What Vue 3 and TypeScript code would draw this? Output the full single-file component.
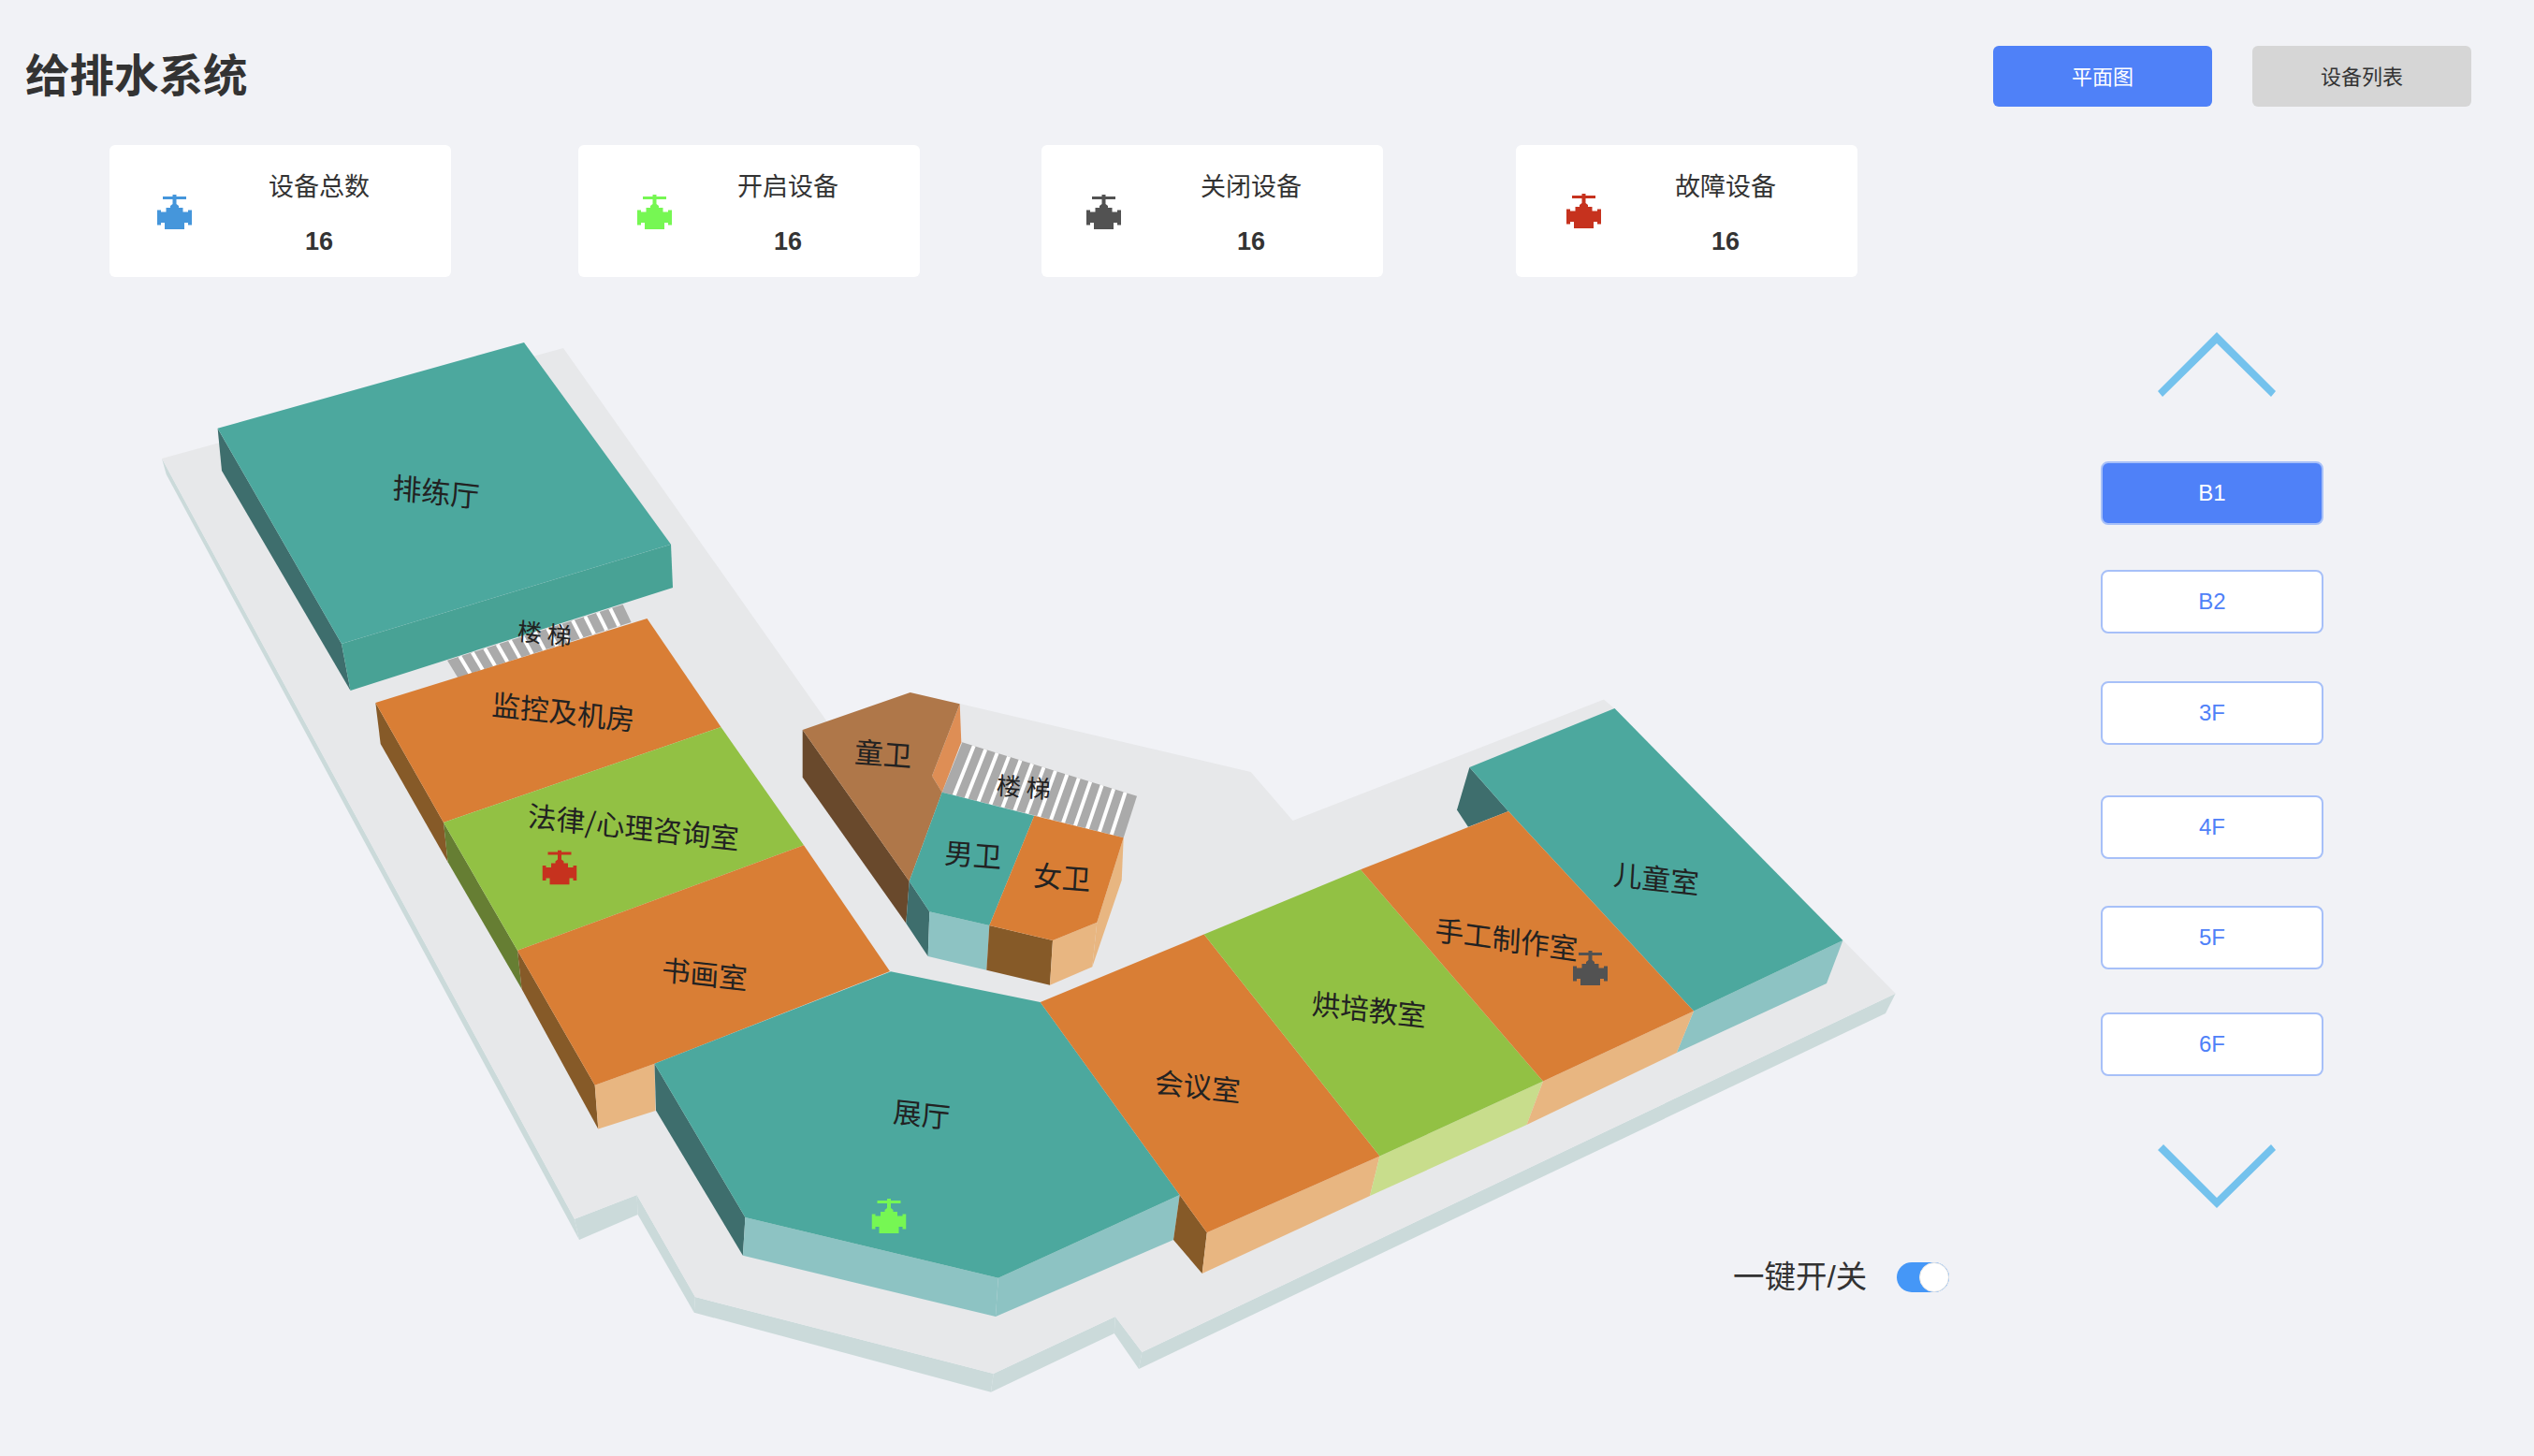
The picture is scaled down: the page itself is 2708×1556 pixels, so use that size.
<script setup lang="ts">
import { ref } from "vue"

interface Face {
  fill: string
  points: string
}
interface Label {
  text: string
  x: number
  y: number
  size?: number
  k?: number
}

const TEAL = "#4ca89e"
const TEAL_DARK = "#3e6e6d"
const TEAL_LIGHT = "#8dc3c3"
const ORANGE = "#d97e35"
const ORANGE_DARK = "#865a28"
const ORANGE_LIGHT = "#e8b681"
const GREEN = "#92c144"
const BASE_SIDE = "#cbdada"

const stats = [
  { label: "设备总数", value: 16, color: "#4596db" },
  { label: "开启设备", value: 16, color: "#76f753" },
  { label: "关闭设备", value: 16, color: "#525252" },
  { label: "故障设备", value: 16, color: "#c6321e" },
]

const floors = ["B1", "B2", "3F", "4F", "5F", "6F"]
const activeFloor = ref("B1")
const allOn = ref(true)

const VALVE = "M6 2H16.5V0H20.5V2H31V5H20.5V10L23 12V14H27.5V18.5H33V16.5H37V32.5H33V30H29V37H8V30H4V32.5H0V16.5H4V18.5H9.5V14H14V12L16.5 10V5H6Z"

const baseTop = "173,490 602,372 883,770 900,795 1000,800 1025.7,752 1336.7,825 1381.6,877 1714,747.6 1725,757 2025.7,1061.7 1220.4,1445 1191.8,1407 1061.7,1468 742.9,1386 680.6,1277 614,1302.7"

const baseSides = [
  "173,490 177.7,507 619,1325 614,1302.7",
  "614,1302.7 619,1325 681.6,1298 680.6,1277",
  "680.6,1277 681.6,1298 741.8,1402.7 742.9,1386",
  "742.9,1386 741.8,1402.7 1059,1487.7 1061.7,1468",
  "1061.7,1468 1059,1487.7 1190.8,1425 1191.8,1407",
  "1191.8,1407 1190.8,1425 1217,1463 1220.4,1445",
  "1220.4,1445 1217,1463 2015,1083 2025.7,1061.7",
]

// stair stripes are interpolated between the two long edges
function stripes(a: number[], b: number[], c: number[], d: number[], n: number) {
  const out = []
  for (let i = 1; i < n; i++) {
    const t = i / n
    out.push({
      x1: a[0] + (b[0] - a[0]) * t,
      y1: a[1] + (b[1] - a[1]) * t,
      x2: d[0] + (c[0] - d[0]) * t,
      y2: d[1] + (c[1] - d[1]) * t,
    })
  }
  return out
}

const stairsA = "478,705.7 665.6,646 674.6,665 489.3,724.3"
const stairsB = "1028.3,793.3 1215,850.7 1200.7,895.3 1006.7,846.7"
const stripesA = stripes([478, 705.7], [665.6, 646], [674.6, 665], [489.3, 724.3], 14)
const stripesB = stripes([1028.3, 793.3], [1215, 850.7], [1200.7, 895.3], [1006.7, 846.7], 15)

const faces: Face[] = [
  // 排练厅
  { fill: TEAL_DARK, points: "232.6,457.7 365,688 374.5,738 237,503" },
  { fill: "#48a295", points: "365,688 717,581.7 719,628 374.5,738" },
  { fill: TEAL, points: "560,366 232.6,457.7 365,688 717,581.7" },
  // 监控及机房 / 法律 / 书画室
  { fill: ORANGE_DARK, points: "401.3,751 474,879 478.6,921.3 406.7,795" },
  { fill: "#667e33", points: "474,879 553,1015.8 557.6,1057 478.6,921.3" },
  { fill: ORANGE_DARK, points: "553,1015.8 635.7,1159.7 639.3,1206.4 557.6,1057" },
  { fill: ORANGE_LIGHT, points: "635.7,1159.7 699.5,1136.7 700.5,1187 639.3,1206.4" },
  { fill: ORANGE, points: "401.3,751 691.5,661 770.5,777 474,879" },
  { fill: GREEN, points: "474,879 770.5,777 859,903.3 553,1015.8" },
  { fill: ORANGE, points: "553,1015.8 859,903.3 951,1038 699.5,1136.7 635.7,1159.7" },
  // 童卫
  { fill: "#69492c", points: "857.7,780 971.7,941.7 968.3,986.7 857.7,830.7" },
  { fill: "#de8e55", points: "1025.7,752.3 1027.3,793.3 1006.7,846.7 996,829.3" },
  { fill: "#af7749", points: "857.7,780 972.7,740 1025.7,752.3 996,829.3 1006.7,846.7 971.7,941.7" },
  // 男卫
  { fill: TEAL_DARK, points: "971.7,941.7 993.3,974.3 991.7,1022 968.3,986.7" },
  { fill: TEAL_LIGHT, points: "993.3,974.3 1057.3,989 1054.3,1036.7 991.7,1022" },
  { fill: TEAL, points: "1006.7,846.7 1105.3,871.7 1057.3,989 993.3,974.3 971.7,941.7" },
  // 女卫
  { fill: ORANGE_DARK, points: "1057.3,989 1125,1005 1122,1052.7 1054.3,1036.7" },
  { fill: ORANGE_LIGHT, points: "1125,1005 1172.3,985.7 1167.3,1033.3 1122,1052.7" },
  { fill: ORANGE_LIGHT, points: "1200.7,895.3 1198.7,940.7 1167.3,1033.3 1172.3,985.7" },
  { fill: ORANGE, points: "1105.3,871.7 1200.7,895.3 1172.3,985.7 1125,1005 1057.3,989" },
  // 展厅
  { fill: TEAL_DARK, points: "699.5,1136.7 796.4,1301 793.9,1341.7 701,1186.7" },
  { fill: TEAL_LIGHT, points: "796.4,1301 1066.8,1365.7 1064,1407 793.9,1341.7" },
  { fill: TEAL_LIGHT, points: "1066.8,1365.7 1260.7,1277 1254,1325 1064,1407" },
  { fill: TEAL, points: "699.5,1136.7 952,1038.3 1111.7,1071 1260.7,1277 1066.8,1365.7 796.4,1301" },
  // 儿童室
  { fill: TEAL_DARK, points: "1570.4,820 1612,867 1569,883.8 1557,865.4" },
  { fill: TEAL_LIGHT, points: "1810,1080.5 1969.4,1005 1952,1051 1791.8,1125" },
  { fill: TEAL, points: "1570.4,820 1725.5,757 1969.4,1005 1810,1080.5 1612,867" },
  // 会议室 / 烘培教室 / 手工制作室
  { fill: ORANGE_DARK, points: "1260.7,1277 1289.8,1317.3 1284.7,1361 1254,1325" },
  { fill: ORANGE_LIGHT, points: "1289.8,1317.3 1474.5,1235.5 1464,1278 1284.7,1361" },
  { fill: ORANGE, points: "1111.7,1071 1286.7,998.6 1474.5,1235.5 1289.8,1317.3 1260.7,1277" },
  { fill: "#c8dd8c", points: "1474.5,1235.5 1649,1155.5 1631.6,1202 1464,1278" },
  { fill: GREEN, points: "1286.7,998.6 1454,929.3 1649,1155.5 1474.5,1235.5" },
  { fill: ORANGE_LIGHT, points: "1649,1155.5 1810,1080.5 1791.8,1125 1631.6,1202" },
  { fill: ORANGE, points: "1454,929.3 1612,867 1810,1080.5 1649,1155.5" },
]

const labels: Label[] = [
  { text: "排练厅", x: 466, y: 524, size: 31 },
  { text: "监控及机房", x: 602, y: 759 },
  { text: "法律/心理咨询室", x: 677, y: 882 },
  { text: "书画室", x: 753, y: 1039 },
  { text: "展厅", x: 985, y: 1189 },
  { text: "会议室", x: 1280, y: 1159 },
  { text: "烘培教室", x: 1463, y: 1077 },
  { text: "手工制作室", x: 1610, y: 1002, k: 0.14 },
  { text: "儿童室", x: 1770, y: 937 },
  { text: "童卫", x: 944, y: 804, k: 0.08 },
  { text: "男卫", x: 1040, y: 912, k: 0.08 },
  { text: "女卫", x: 1135, y: 936, k: 0.08 },
  { text: "楼 梯", x: 582, y: 676, size: 26 },
  { text: "楼 梯", x: 1094, y: 840, size: 26, k: 0.08 },
]

const mapValves = [
  { x: 579.5, y: 908.5, color: "#c6321e" },
  { x: 931.5, y: 1281, color: "#76f753" },
  { x: 1681, y: 1016, color: "#525252" },
]

function labelMatrix(l: Label) {
  return `matrix(1 ${l.k ?? 0.11} -0.06 1 ${l.x} ${l.y})`
}
</script>

<template>
  <div class="page">
    <header class="top">
      <h1 class="title">给排水系统</h1>
      <div class="tabs">
        <button class="tab tab-active">平面图</button>
        <button class="tab">设备列表</button>
      </div>
    </header>

    <section class="stats">
      <div v-for="s in stats" :key="s.label" class="stat">
        <div class="stat-slot">
          <svg class="stat-icon" width="37" height="37" viewBox="0 0 37 37">
            <path :d="VALVE" :fill="s.color" />
          </svg>
        </div>
        <div class="stat-text">
          <div class="stat-label">{{ s.label }}</div>
          <div class="stat-value">{{ s.value }}</div>
        </div>
      </div>
    </section>

    <main class="main">
      <div class="map">
        <svg class="map-svg" width="2100" height="1216" viewBox="0 340 2100 1216">
          <polygon v-for="(p, i) in baseSides" :key="i" :points="p" :fill="BASE_SIDE" />
          <polygon :points="baseTop" fill="#e7e8ea" />

          <polygon :points="stairsA" fill="#aaaaaa" />
          <line
            v-for="(l, i) in stripesA"
            :key="'a' + i"
            :x1="l.x1" :y1="l.y1" :x2="l.x2" :y2="l.y2"
            stroke="#fff"
            stroke-width="4"
          />
          <polygon :points="stairsB" fill="#aaaaaa" />
          <line
            v-for="(l, i) in stripesB"
            :key="'b' + i"
            :x1="l.x1" :y1="l.y1" :x2="l.x2" :y2="l.y2"
            stroke="#fff"
            stroke-width="4"
          />

          <polygon v-for="(f, i) in faces" :key="i" :points="f.points" :fill="f.fill" />

          <text
            v-for="l in labels"
            :key="l.text + l.x"
            class="room"
            :font-size="l.size ?? 30.5"
            :transform="labelMatrix(l)"
          >{{ l.text }}</text>

          <svg
            v-for="v in mapValves"
            :key="v.x"
            :x="v.x"
            :y="v.y"
            width="37"
            height="37"
            viewBox="0 0 37 37"
          >
            <path :d="VALVE" :fill="v.color" />
          </svg>
        </svg>

        <div class="master">
          <span class="master-label">一键开/关</span>
          <span class="switch" :class="{ on: allOn }" @click="allOn = !allOn">
            <i class="knob"></i>
          </span>
        </div>
      </div>

      <aside class="floors">
        <svg class="chevron chevron-up" width="126" height="69" viewBox="0 0 126 69">
          <polygon points="63,0 126,63 121,69 63,12 5,69 0,63" fill="#74c2ed" />
        </svg>
        <button
          v-for="f in floors"
          :key="f"
          class="floor"
          :class="{ 'floor-active': f === activeFloor }"
          @click="activeFloor = f"
        >{{ f }}</button>
        <svg class="chevron chevron-down" width="126" height="68" viewBox="0 0 126 68">
          <polygon points="6,0 63,57 121,0 126,6 63,68 0,6" fill="#74c2ed" />
        </svg>
      </aside>
    </main>
  </div>
</template>

<style>
html,
body {
  margin: 0;
  background: #f1f2f6;
}
</style>

<style scoped>
.page {
  width: 2708px;
  height: 1556px;
  overflow: hidden;
  background: #f1f2f6;
  color: #333;
  font-family: "Liberation Sans", "Noto Sans CJK SC", sans-serif;
}

.top {
  display: flex;
  align-items: center;
  justify-content: space-between;
  height: 65px;
  padding: 49px 67px 0 27px;
}

.title {
  margin: 0;
  font-size: 47.5px;
  font-weight: 700;
  line-height: 65px;
  color: #333;
}

.tabs {
  display: flex;
  gap: 43px;
}

.tab {
  width: 234px;
  height: 65px;
  padding: 0 0 3px;
  border: 0;
  border-radius: 6px;
  background: #d6d6d6;
  color: #333;
  font: 22px "Liberation Sans", "Noto Sans CJK SC", sans-serif;
}

.tab-active {
  background: #4f81f8;
  color: #fff;
}

.stats {
  display: flex;
  margin-top: 41px;
  padding-left: 117px;
}

.stat {
  display: flex;
  align-items: center;
  width: 365px;
  height: 141px;
  border-radius: 6px;
  background: #fff;
}

.stat:nth-child(2) {
  margin-left: 136px;
}

.stat:nth-child(3) {
  margin-left: 130px;
}

.stat:nth-child(4) {
  margin-left: 142px;
}

.stat-slot {
  flex: none;
  width: 144px;
}

.stat-icon {
  display: block;
  margin: 2px 0 0 51px;
}

.stat:nth-child(2) .stat-icon {
  margin-left: 63px;
}

.stat:nth-child(3) .stat-icon {
  margin-left: 48px;
}

.stat:nth-child(4) .stat-icon {
  margin: 0 0 0 54px;
}

.stat-text {
  width: 160px;
  margin-top: 5px;
  text-align: center;
}

.stat-label {
  font-size: 27px;
  line-height: 40px;
}

.stat-value {
  margin-top: 20px;
  font-size: 27px;
  font-weight: 700;
  line-height: 36px;
}

.main {
  display: flex;
  margin-top: 44px;
}

.map {
  position: relative;
  width: 2100px;
  height: 1216px;
  flex: none;
}

.map-svg {
  display: block;
}

.room {
  fill: #222;
  text-anchor: middle;
  dominant-baseline: central;
  font-family: "Noto Sans CJK SC", "Liberation Sans", sans-serif;
}

.master {
  position: absolute;
  left: 1852px;
  top: 1007px;
  display: flex;
  align-items: center;
  gap: 32px;
}

.master-label {
  font-size: 33.5px;
  line-height: 36px;
}

.switch {
  position: relative;
  display: block;
  width: 56px;
  height: 32px;
  border-radius: 16px;
  background: #dcdfe6;
}

.switch.on {
  background: #4597f7;
}

.knob {
  position: absolute;
  top: 0;
  left: 0;
  width: 30px;
  height: 30px;
  border: 1px solid #e4e4e4;
  border-radius: 50%;
  background: #fff;
}

.switch.on .knob {
  left: 24px;
}

.floors {
  display: flex;
  flex-direction: column;
  align-items: flex-start;
  width: 238px;
  margin-left: 145px;
}

.chevron {
  display: block;
  margin-left: 61px;
}

.chevron-up {
  margin-top: 15px;
}

.chevron-down {
  margin-top: 73px;
}

.floor {
  box-sizing: border-box;
  width: 238px;
  height: 68px;
  border: 2px solid #a7c0f8;
  border-radius: 8px;
  background: #fff;
  color: #4f81f8;
  font: 24px "Liberation Sans", sans-serif;
}

.floor-active {
  background: #4f81f8;
  color: #fff;
}

.floor:nth-of-type(1) {
  margin-top: 69px;
}

.floor:nth-of-type(2) {
  margin-top: 48px;
}

.floor:nth-of-type(3) {
  margin-top: 51px;
}

.floor:nth-of-type(4) {
  margin-top: 54px;
}

.floor:nth-of-type(5) {
  margin-top: 50px;
}

.floor:nth-of-type(6) {
  margin-top: 46px;
}
</style>
